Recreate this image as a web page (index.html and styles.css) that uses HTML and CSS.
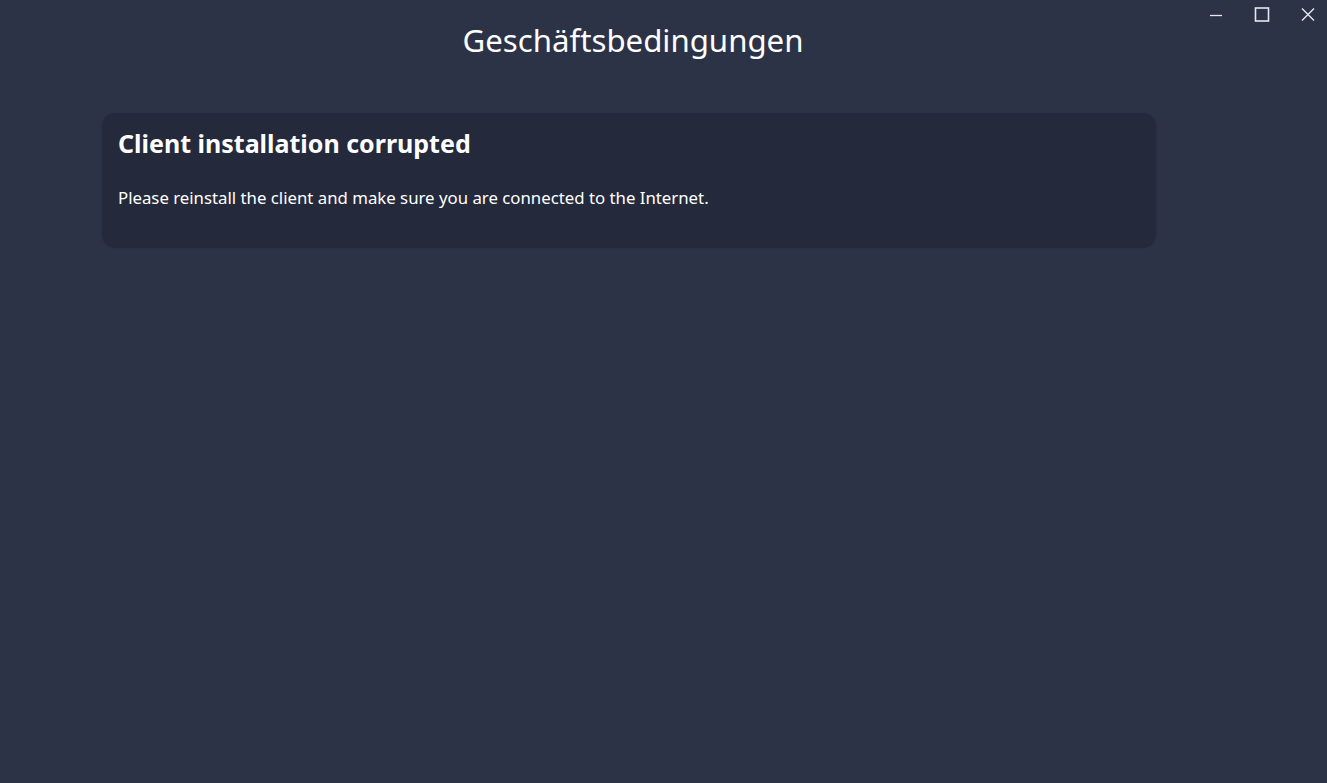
FILE: index.html
```html
<!DOCTYPE html>
<html lang="de">
<head>
<meta charset="utf-8">
<title>Geschäftsbedingungen</title>
<link rel="stylesheet" href="styles.css">
</head>
<body>
<div class="window">
  <div class="controls">
    <button class="ctl" aria-label="Minimieren">
      <svg width="14" height="14" viewBox="0 0 14 14"><path d="M1 7.5h12" stroke="#e6e8ee" stroke-width="1.3"/></svg>
    </button>
    <button class="ctl" aria-label="Maximieren">
      <svg width="16" height="16" viewBox="0 0 16 16"><rect x="1.5" y="1" width="13" height="13" fill="none" stroke="#e6e8ee" stroke-width="1.6"/></svg>
    </button>
    <button class="ctl" aria-label="Schließen">
      <svg width="16" height="16" viewBox="0 0 16 16"><path d="M2 1.5l12 12M14 1.5L2 13.5" stroke="#e6e8ee" stroke-width="1.4"/></svg>
    </button>
  </div>
  <h1 class="title">Geschäftsbedingungen</h1>
  <div class="card">
    <h2 class="card-title">Client installation corrupted</h2>
    <p class="card-text">Please reinstall the client and make sure you are connected to the Internet.</p>
  </div>
</div>
</body>
</html>
```
FILE: styles.css
```css
html, body {
  margin: 0;
  padding: 0;
  height: 100%;
  overflow: hidden;
}
body {
  background: #2c3347;
  font-family: "Noto Sans", "Open Sans", sans-serif;
  color: #ffffff;
}
.window {
  position: relative;
  height: 100%;
  padding: 0 171px 0 102px;
  box-sizing: border-box;
}
.controls {
  position: absolute;
  top: 0;
  right: -4px;
  display: flex;
}
.ctl {
  width: 46px;
  height: 29px;
  border: 0;
  background: transparent;
  padding: 0;
  display: flex;
  align-items: center;
  justify-content: center;
}
.title {
  margin: 0;
  padding-top: 19px;
  padding-left: 8px;
  height: 113px;
  box-sizing: border-box;
  text-align: center;
  font-weight: 400;
  font-size: 31.2px;
  line-height: 42px;
}
.card {
  background: #242a3c;
  border-radius: 14px;
  padding: 13px 16px 39px 16px;
  box-shadow: 0 0 2px rgba(0,0,0,0.15);
}
.card-title {
  margin: 0;
  font-size: 25px;
  font-weight: 700;
  line-height: 34px;
}
.card-text {
  margin: 26px 0 0 0;
  font-size: 16.8px;
  line-height: 23px;
}
```
